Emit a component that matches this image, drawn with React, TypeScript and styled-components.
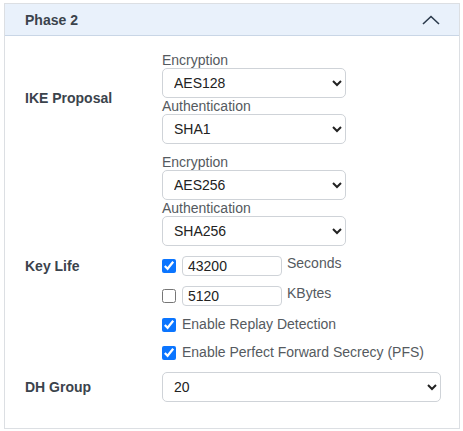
import React from "react";
import styled, { createGlobalStyle } from "styled-components";

const Global = createGlobalStyle`
  html, body { margin: 0; padding: 0; background: #fff; }
  body { font-family: "Liberation Sans", Arial, sans-serif; font-size: 14px; }
  * { box-sizing: border-box; }
`;

const Card = styled.section`
  margin: 3px 0 0 4px;
  width: 456px;
  height: 426px;
  border: 1px solid #dcdfe3;
  background: #fff;
`;

const Header = styled.div`
  height: 32px;
  display: flex;
  align-items: center;
  justify-content: space-between;
  padding: 0 19px 0 20px;
  background: #e9f1fb;
  border-bottom: 1px solid #c9d6e6;
`;

const Title = styled.h3`
  margin: 0;
  font-size: 14px;
  font-weight: bold;
  color: #3b434c;
`;

const Body = styled.div`
  padding: 16px 18px 0 20px;
  display: flex;
  flex-direction: column;
  gap: 10px;
`;

const Row = styled.div<{ $align?: string }>`
  display: grid;
  grid-template-columns: 137px 1fr;
  align-items: ${(p) => p.$align || "center"};
`;

const RowLabel = styled.div`
  font-weight: bold;
  color: #3b434c;
  font-size: 14px;
`;

const Stack = styled.div<{ $gap?: number }>`
  display: flex;
  flex-direction: column;
  gap: ${(p) => p.$gap ?? 0}px;
`;

const FieldLabel = styled.div`
  color: #555a60;
  font-size: 14px;
  line-height: 16px;
`;

const Select = styled.select<{ $w?: number }>`
  width: ${(p) => (p.$w ? `${p.$w}px` : "100%")};
  height: 30px;
  border: 1px solid #cfd3d8;
  border-radius: 5px;
  background: #fff;
  color: #222;
  font-family: "Liberation Sans", Arial, sans-serif;
  font-size: 14px;
  padding: 0 7px;
`;

const Line = styled.div<{ $h?: number }>`
  display: flex;
  align-items: center;
  height: ${(p) => p.$h ?? 20}px;
  gap: 6px;
`;

const Check = styled.input`
  margin: 0;
  width: 14px;
  height: 14px;
  accent-color: #0b75ff;
  flex: none;
`;

const NumInput = styled.input`
  width: 100px;
  height: 20px;
  border: 1px solid #cfd3d8;
  border-radius: 4px;
  padding: 0 5px;
  font-family: "Liberation Sans", Arial, sans-serif;
  font-size: 14px;
  color: #222;
`;

const Unit = styled.span`
  color: #555a60;
  align-self: flex-start;
  margin-top: -1px;
  margin-left: -1px;
`;

const CheckText = styled.span`
  color: #555a60;
  margin-top: -3px;
`;

const Chevron = () => (
  <svg width="18" height="10" viewBox="0 0 18 10" fill="none">
    <path d="M1 9 L9 1.5 L17 9" stroke="#2b3a4c" strokeWidth="1.6" />
  </svg>
);

export default function App() {
  return (
    <>
      <Global />
      <Card>
        <Header>
          <Title>Phase 2</Title>
          <Chevron />
        </Header>
        <Body>
          <Row>
            <RowLabel>IKE Proposal</RowLabel>
            <Stack>
              <FieldLabel>Encryption</FieldLabel>
              <Select $w={184} defaultValue="AES128">
                <option>AES128</option>
                <option>AES256</option>
              </Select>
              <FieldLabel>Authentication</FieldLabel>
              <Select $w={184} defaultValue="SHA1">
                <option>SHA1</option>
                <option>SHA256</option>
              </Select>
            </Stack>
          </Row>
          <Row>
            <div />
            <Stack>
              <FieldLabel>Encryption</FieldLabel>
              <Select $w={184} defaultValue="AES256">
                <option>AES128</option>
                <option>AES256</option>
              </Select>
              <FieldLabel>Authentication</FieldLabel>
              <Select $w={184} defaultValue="SHA256">
                <option>SHA1</option>
                <option>SHA256</option>
              </Select>
            </Stack>
          </Row>
          <Row>
            <RowLabel>Key Life</RowLabel>
            <Line>
              <Check type="checkbox" defaultChecked />
              <NumInput defaultValue="43200" />
              <Unit>Seconds</Unit>
            </Line>
          </Row>
          <Row>
            <div />
            <Line>
              <Check type="checkbox" />
              <NumInput defaultValue="5120" />
              <Unit>KBytes</Unit>
            </Line>
          </Row>
          <Row>
            <div />
            <Line $h={18}>
              <Check type="checkbox" defaultChecked />
              <CheckText>Enable Replay Detection</CheckText>
            </Line>
          </Row>
          <Row>
            <div />
            <Line $h={18}>
              <Check type="checkbox" defaultChecked />
              <CheckText>Enable Perfect Forward Secrecy (PFS)</CheckText>
            </Line>
          </Row>
          <Row>
            <RowLabel>DH Group</RowLabel>
            <Select defaultValue="20">
              <option>14</option>
              <option>19</option>
              <option>20</option>
            </Select>
          </Row>
        </Body>
      </Card>
    </>
  );
}
